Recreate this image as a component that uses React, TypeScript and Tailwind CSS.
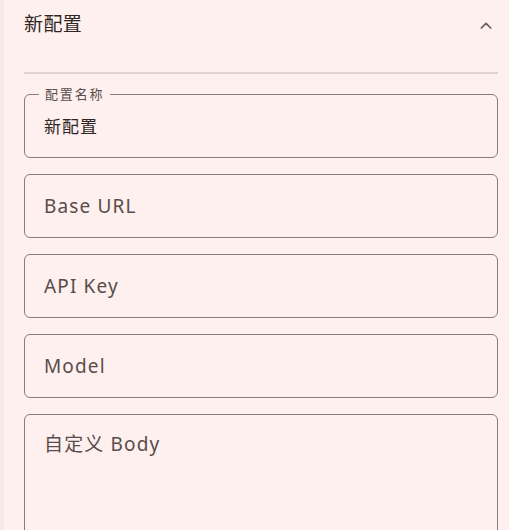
import React from "react";

const font = { fontFamily: '"Noto Sans", "Noto Sans CJK SC", sans-serif' };

function Field({ label, value, placeholder, tall }: { label?: string; value?: string; placeholder?: string; tall?: boolean }) {
  return (
    <div className={`relative rounded-[6px] border border-[#8c7a78] ${tall ? "h-[140px]" : "h-[64px]"}`}>
      {label && (
        <span className="absolute -top-[9px] left-[14px] bg-[#fdf0ee] px-[6px] text-[13px] leading-[16px] tracking-[0.14em] text-[#5a4c4a]">
          {label}
        </span>
      )}
      {value ? (
        <div className="px-[19px] pt-[20px] text-[17px] leading-[24px] tracking-[0.06em] text-[#2f2624]">{value}</div>
      ) : (
        <div className={`px-[19px] ${tall ? "pt-[16px]" : "pt-[18px]"} text-[19px] leading-[26px] tracking-[0.06em] text-[#5a4c4a]`}>
          {placeholder}
        </div>
      )}
    </div>
  );
}

export default function App() {
  return (
    <div className="flex h-[530px] w-[509px] overflow-hidden bg-[#f7e9e7]" style={font}>
      <div className="ml-[4px] flex-1 bg-[#fdf0ee] pl-[20px] pr-[11px]">
        <div className="flex h-[49px] items-center justify-between">
          <span className="text-[19px] tracking-[0.02em] text-[#2f2624]">新配置</span>
          <svg width="16" height="16" viewBox="0 0 24 24" className="mr-[4px] mt-[2px]" fill="none" stroke="#6a5c5a" strokeWidth="2.6" strokeLinecap="round" strokeLinejoin="round">
            <path d="M5 15l7-7 7 7" />
          </svg>
        </div>
        <div className="mt-[23px] h-[2px] bg-[#e2d2d0]" />
        <div className="mt-[20px] flex flex-col gap-[16px]">
          <Field label="配置名称" value="新配置" />
          <Field placeholder="Base URL" />
          <Field placeholder="API Key" />
          <Field placeholder="Model" />
          <Field placeholder="自定义 Body" tall />
        </div>
      </div>
    </div>
  );
}
